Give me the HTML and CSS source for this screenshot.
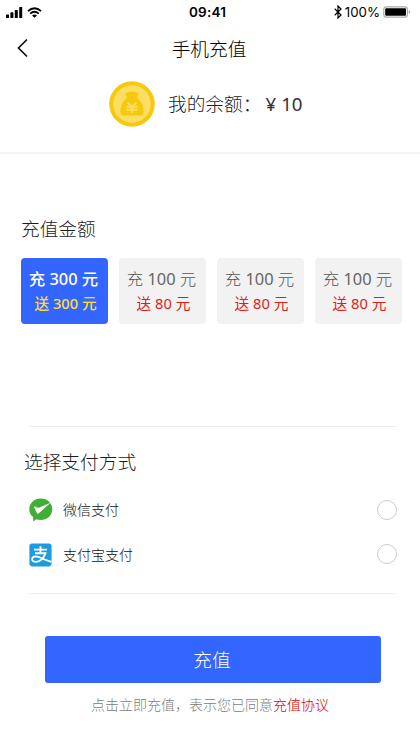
FILE: index.html
```
<!DOCTYPE html>
<html lang="zh-CN">
<head>
<meta charset="utf-8">
<meta name="viewport" content="width=device-width, initial-scale=1">
<title>手机充值</title>
<link rel="stylesheet" href="styles.css">
</head>
<body>
<header class="status">
  <div class="status-left">
    <svg class="signal" width="17" height="11" viewBox="0 0 17 11"><rect x="0" y="7.5" width="3" height="3.5" rx=".6"/><rect x="4.4" y="5.3" width="3" height="5.7" rx=".6"/><rect x="8.8" y="3" width="3" height="8" rx=".6"/><rect x="13.2" y="0" width="3" height="11" rx=".6"/></svg>
    <svg class="wifi" width="15" height="11" viewBox="0 0 15 11"><path d="M.9 4.1Q7.5-1.7 14.1 4.1M3.2 6.6Q7.5 3 11.8 6.6" fill="none" stroke="#000" stroke-width="1.8"/><path d="M5 8.4Q7.5 6.8 10 8.4L7.5 10.8Z"/></svg>
  </div>
  <time class="clock">09:41</time>
  <div class="status-right">
    <svg width="8" height="14" viewBox="0 0 8 14"><path d="M.7 3.8L7 10 4 13V1L7 4 .7 10.2" fill="none" stroke="#000" stroke-width="1.2"/></svg>
    <span class="percent">100%</span>
    <svg width="28" height="12" viewBox="0 0 28 12"><rect x=".8" y=".8" width="23.6" height="10.4" rx="2.5" fill="#fff" stroke="#aaa" stroke-width="1.2"/><rect x="2.2" y="2.2" width="20.8" height="7.6" rx="1"/><path d="M25.8 4Q28.4 6 25.8 8Z" fill="#999"/></svg>
  </div>
</header>
<nav class="navbar">
  <svg class="back" width="12" height="20" viewBox="0 0 12 20"><path d="M10 1.5L1.5 10 10 18.5" fill="none" stroke="#111" stroke-width="1.7"/></svg>
  <h1 class="title">手机充值</h1>
</nav>
<section class="balance">
  <svg width="46" height="46" viewBox="0 0 46 46"><circle cx="23" cy="23" r="22.8" fill="#f6c90e"/><circle cx="23" cy="23" r="18.7" fill="#fbdf65"/><path d="M18 16.5Q14.5 11.2 19 11.5Q23 9.500 27 11.500Q31.500 11.200 28 16.500Q34.700 22 34.700 30.500Q34.700 34.600 31 34.600H15Q11.300 34.600 11.300 30.500Q11.300 22 18 16.500Z" fill="#f6c90e"/><path d="M18.500 21.500L23 26 27.500 21.500M17.500 25.800H28.500M17.500 28.800H28.500M23 25.500V32" fill="none" stroke="#fbdf65" stroke-width="1.900"/></svg>
  <p class="balance-text">我的余额：<span class="sum"><span class="yen">¥</span>10</span></p>
</section>
<section class="amount">
  <h2 class="heading">充值金额</h2>
  <div class="cards">
    <div class="card selected"><span class="pay">充 <b class="num">300</b> 元</span><span class="gift">送 300 元</span></div>
    <div class="card"><span class="pay">充 <b class="num">100</b> 元</span><span class="gift">送 80 元</span></div>
    <div class="card"><span class="pay">充 <b class="num">100</b> 元</span><span class="gift">送 80 元</span></div>
    <div class="card"><span class="pay">充 <b class="num">100</b> 元</span><span class="gift">送 80 元</span></div>
  </div>
</section>
<section class="methods">
  <h2 class="heading methods-heading">选择支付方式</h2>
  <div class="method">
    <svg width="24" height="24" viewBox="0 0 24 24"><path d="M11.800.4C18.200.4 23.300 5 23.300 11.200S18.200 22 11.800 22Q9.400 22 7.300 21.200L4.200 23.600 4.100 19.100Q.3 16 .3 11.200C.3 5 5.400.4 11.800.4Z" fill="#42ae35"/><path d="M5 9Q6 7.500 9.200 10L21.600 4.800 9.500 15.600Q8.500 16.200 7.800 15Z" fill="#fff"/></svg>
    <span class="method-name">微信支付</span><i class="radio"></i>
  </div>
  <div class="method">
    <svg width="24" height="24" viewBox="0 0 24 24"><rect x=".4" y=".4" width="22.200" height="23" rx="2.800" fill="#1f9cdd"/><path d="M5 6.600H18M11.500 3.200V10.100M6 10.200H16.400Q14.700 15.700 10.200 18Q5.500 20 3.500 17.500Q2.300 14.800 5.200 13.700Q8 12.900 12.300 15Q17 17.300 22.500 18.800" fill="none" stroke="#fff" stroke-width="1.900"/></svg>
    <span class="method-name">支付宝支付</span><i class="radio"></i>
  </div>
</section>
<footer class="footer">
  <button class="submit">充值</button>
  <p class="terms">点击立即充值，表示您已同意<a class="link">充值协议</a></p>
</footer>
</body>
</html>
```

FILE: styles.css
```
* { box-sizing: border-box; }
body { margin: 0; width: 420px; height: 747px; overflow: hidden; background: #fff; color: #1c1c1c; font-family: "Noto Sans", "Noto Sans CJK SC", sans-serif; font-weight: 300; }
h1, h2, p { margin: 0; font-weight: 300; }
svg { display: block; flex: none; }
.status { height: 24px; padding: 0 9px 0 6px; display: grid; grid-template-columns: 1fr auto 1fr; align-items: center; font-family: Inter, sans-serif; color: #000; }
.status-left, .status-right { display: flex; align-items: center; }
.status-left { gap: 4px; }
.status-right { justify-content: flex-end; gap: 3px; }
.clock { font-size: 13.5px; font-weight: 600; line-height: 24px; letter-spacing: .2px; margin: 0 2px 0 0; }
.percent { font-size: 13.3px; font-weight: 400; }
.navbar { height: 48px; padding-top: 1px; display: grid; grid-template-columns: 60px 1fr 62px; align-items: center; }
.back { margin: -2px 0 0 17px; }
.title { font-size: 18.7px; line-height: 28px; text-align: center; color: #000; }
.balance { height: 82px; padding: 9px 0 0 109px; display: flex; align-items: flex-start; gap: 13px; border-bottom: 2px solid #f4f4f4; }
.balance-text { font-size: 18.7px; line-height: 46px; white-space: nowrap; }
.sum { font-weight: 400; color: #333; }
.yen { margin: 0 5px 0 4px; }
.amount { height: 272px; padding: 60px 18px 0 21px; }
.heading { font-size: 18.7px; line-height: 30px; }
.cards { margin-top: 14px; display: grid; grid-template-columns: repeat(4, 87px); gap: 11px; }
.card { height: 66px; padding-top: 8px; border-radius: 4px; background: #f2f2f2; display: flex; flex-direction: column; align-items: center; color: #555; }
.num { font-weight: 400; color: #666; }
.pay { font-size: 16.4px; line-height: 25px; white-space: nowrap; padding-right: 2px; }
.gift { font-size: 14.7px; line-height: 24px; color: #e01c1c; font-weight: 400; white-space: nowrap; padding-left: 2px; }
.selected { background: #36f; color: #fff; }
.selected .pay, .selected .num { font-weight: 500; color: #fff; }
.selected .gift { color: #fd3; font-weight: 500; }
.methods { height: 168px; margin: 0 23px 0 29px; border-top: 1px solid #eee; border-bottom: 1px solid #f1f1f1; }
.methods-heading { margin: 20px 0 11px -5px; }
.method { height: 44.5px; display: flex; align-items: center; }
.method-name { margin-left: 10px; font-size: 14px; line-height: 24px; color: #111; }
.radio { width: 20px; height: 20px; margin: -1px 0 0 auto; border: 1px solid #ccc; border-radius: 50%; }
.footer { padding: 42px 39px 0 45px; }
.submit { display: block; width: 336px; height: 47px; padding: 0 2px 0 0; border: 0; border-radius: 3px; background: #36f; color: #fff; font: 300 18.7px/47px "Noto Sans", "Noto Sans CJK SC", sans-serif; }
.terms { margin-top: 10px; padding-right: 6px; font-size: 14px; line-height: 24px; text-align: center; color: #808080; white-space: nowrap; }
.link { color: #d80000; }
```
